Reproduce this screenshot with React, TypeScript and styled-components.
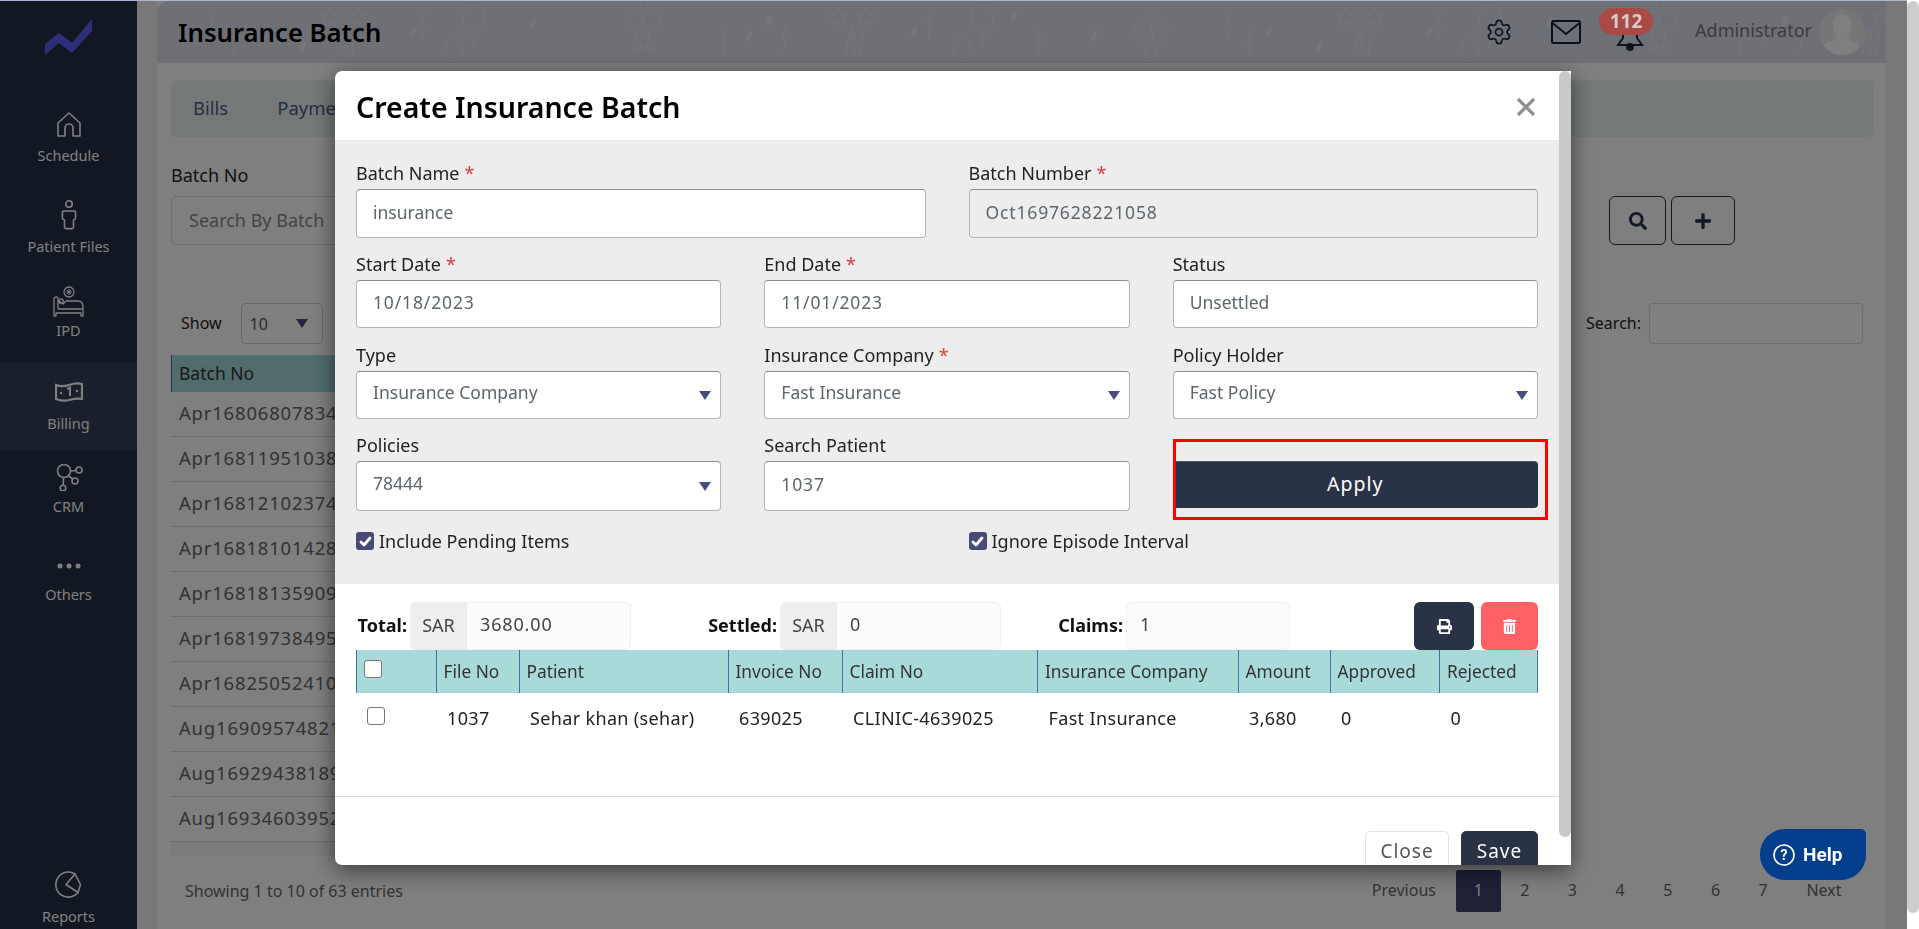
import React from "react";
import styled, { createGlobalStyle } from "styled-components";
import { FaSearch, FaPlus, FaPrint, FaTrashAlt } from "react-icons/fa";
import { Settings } from "lucide-react";

const FONT = `"Noto Sans", "Open Sans", "Lato", sans-serif`;

const Global = createGlobalStyle`
  html, body { height: 929px; overflow: hidden; background: #fff; }
  body { margin: 0; font-family: ${FONT}; font-size: 18px; color: #222; }
  * { box-sizing: border-box; }
`;

const Shell = styled.div`
  display: grid;
  grid-template-columns: 137px 1fr;
  width: 1907px;
  height: 929px;
  overflow: hidden;
  background: #eef0ee;
`;

const PageBar = styled.div`
  position: fixed;
  right: 0;
  top: 0;
  width: 12px;
  height: 929px;
  background: #fff;
`;

const BarThumb = styled.div<{ $h: number }>`
  width: 12px;
  height: ${(p) => p.$h}px;
  margin-top: 1px;
  border-radius: 6px;
  background: #cdcdcd;
`;

const Sidebar = styled.aside`
  height: 929px;
  background: #243042;
  display: flex;
  flex-direction: column;
  color: #fff;
`;

const LogoBox = styled.div`
  height: 100px;
  display: flex;
  justify-content: center;
  padding-top: 19px;
`;

const NavItem = styled.div<{ $h: number; $pad: number; $gap: number; $active?: boolean; $bottom?: boolean }>`
  height: ${(p) => p.$h}px;
  padding-top: ${(p) => p.$pad}px;
  background: ${(p) => (p.$active ? "#344056" : "transparent")};
  margin-top: ${(p) => (p.$bottom ? "auto" : "0")};
  display: flex;
  flex-direction: column;
  align-items: center;
  gap: ${(p) => p.$gap}px;
`;

const NavIcon = styled.div`
  height: 32px;
  display: flex;
  align-items: center;
  justify-content: center;
`;

const NavLabel = styled.div`
  font-size: 14.5px;
  line-height: 20px;
  white-space: nowrap;
`;

const Main = styled.main`
  padding: 1px 21px 0 20px;
  min-width: 0;
`;

const Card = styled.div`
  background: #fff;
  height: 928px;
  display: flex;
  flex-direction: column;
`;

const Header = styled.header`
  position: relative;
  height: 62px;
  background: #dde0ea;
  border-top-left-radius: 12px;
  display: flex;
  align-items: center;
  padding: 0 0 0 21px;
`;

const Confetti = styled.svg`
  position: absolute;
  left: 0;
  top: 0;
  width: 100%;
  height: 100%;
`;

const PageTitle = styled.h1`
  position: relative;
  margin: 0;
  font-size: 25.7px;
  font-weight: 600;
  color: #000;
  flex: 1;
`;

const HeadIcons = styled.div`
  position: relative;
  display: flex;
  align-items: center;
  height: 100%;
`;

const IconSlot = styled.div<{ $w: number; $drop?: number }>`
  width: ${(p) => p.$w}px;
  padding-top: ${(p) => p.$drop || 0}px;
  display: flex;
  justify-content: center;
  align-items: center;
  color: #1f2a3f;
`;

const Badge = styled.span`
  position: absolute;
  z-index: 11;
  left: 1599px;
  top: 8px;
  width: 54px;
  height: 27px;
  border-radius: 14px;
  background: #a84a46;
  color: #ddc8c4;
  font-size: 19px;
  font-weight: 700;
  line-height: 27px;
  text-align: center;
`;

const AdminName = styled.span`
  font-size: 18px;
  color: #777;
  margin-left: 36px;
  margin-right: 7px;
  padding-bottom: 4px;
`;

const Avatar = styled.div`
  width: 46px;
  height: 46px;
  border-radius: 50%;
  background: #ececec;
  overflow: hidden;
  margin-right: 21px;
`;

const Body = styled.div`
  padding: 17px 13px 0 14px;
  display: flex;
  flex-direction: column;
`;

const Tabs = styled.nav`
  height: 57px;
  background: #e9f3ef;
  border-radius: 5px;
  padding: 0 22px 2px;
  display: flex;
  align-items: center;
  gap: 49px;
  color: #4f5a84;
  font-size: 18.5px;
`;

const SearchRow = styled.div`
  display: flex;
  align-items: flex-end;
  margin-top: 26px;
  height: 82px;
`;

const LabelCol = styled.div`
  width: 700px;
  display: flex;
  flex-direction: column;
  gap: 9px;
  font-size: 18px;
  color: #222;
`;

const BgInput = styled.div`
  height: 49px;
  border: 1px solid #dcdcdc;
  border-radius: 5px;
  padding: 0 17px 2px;
  display: flex;
  align-items: center;
  color: #888;
  font-size: 18px;
`;

const OutlineBtn = styled.div<{ $w: number }>`
  width: ${(p) => p.$w}px;
  height: 49px;
  border: 1px solid #26304a;
  border-radius: 6px;
  color: #26304a;
  display: flex;
  align-items: center;
  justify-content: center;
  font-size: 18px;
`;

const BtnGroup = styled.div`
  margin-left: auto;
  margin-right: 138px;
  display: flex;
  gap: 5px;
`;

const ShowRow = styled.div`
  display: flex;
  align-items: center;
  height: 41px;
  margin-top: 58px;
  padding: 0 10px;
  font-size: 16px;
  color: #222;
`;

const ShowText = styled.span`
  padding-bottom: 2px;
`;

const ShowSelect = styled.div`
  width: 82px;
  height: 41px;
  border: 1px solid #ccc;
  border-radius: 5px;
  margin-left: 19px;
  padding: 0 14px 0 8px;
  display: flex;
  align-items: center;
  justify-content: space-between;
  color: #555;
`;

const Triangle = styled.span<{ $drop?: number }>`
  width: 0;
  height: 0;
  margin-top: ${(p) => p.$drop || 0}px;
  border-left: 6px solid transparent;
  border-right: 6px solid transparent;
  border-top: 9px solid #494d7c;
`;

const SearchLabel = styled.span`
  margin-left: auto;
  margin-right: 8px;
  padding-bottom: 2px;
`;

const SearchBox = styled.div`
  width: 214px;
  height: 41px;
  border: 1px solid #ddd;
  border-radius: 3px;
`;

const BgTable = styled.div`
  margin-top: 11px;
  width: 1300px;
  border-bottom: 14px solid #f6f6f6;
`;

const BgHead = styled.div`
  height: 37px;
  background: #a5d7d7;
  border-left: 1px solid #3b6e9e;
  padding: 0 7px 1px;
  display: flex;
  align-items: center;
  font-size: 17.5px;
  color: #333;
`;

const BgRow = styled.div`
  height: 45px;
  border-bottom: 1px solid #ddd;
  padding: 0 8px 3px;
  display: flex;
  align-items: center;
  font-size: 18.5px;
  letter-spacing: 0.8px;
  color: #666;
`;

const BgFooter = styled.div`
  display: flex;
  align-items: center;
  margin-top: 14px;
  height: 42px;
  padding-left: 14px;
  font-size: 16px;
  color: #666;
`;

const Pager = styled.div`
  margin-left: auto;
  margin-right: 12px;
  display: flex;
  align-items: center;
  color: #666;
`;

const PageBtn = styled.span<{ $active?: boolean; $wide?: number }>`
  width: ${(p) => p.$wide || 47.7}px;
  height: 42px;
  border-radius: 2px;
  padding-bottom: 3px;
  display: flex;
  align-items: center;
  justify-content: center;
  background: ${(p) => (p.$active ? "#404072" : "transparent")};
  color: ${(p) => (p.$active ? "#fff" : "#666")};
`;

const Overlay = styled.div`
  position: fixed;
  left: 0;
  top: 0;
  width: 1907px;
  height: 929px;
  z-index: 10;
  background: rgba(0, 0, 0, 0.5);
  border-top: 1px solid #aab6d4;
`;

const Modal = styled.div`
  position: fixed;
  z-index: 20;
  left: 335px;
  top: 71px;
  width: 1236px;
  height: 794px;
  padding-right: 12px;
  background: #fff;
  border-radius: 7px 0 0 7px;
  box-shadow: 0 5px 22px rgba(0, 0, 0, 0.55);
  overflow: hidden;
`;

const ModalThumb = styled.div`
  position: absolute;
  right: 0;
  top: 0;
  width: 12px;
  height: 766px;
  border-radius: 6px;
  background: #c9c9c9;
`;

const ModalHead = styled.div`
  height: 69px;
  padding: 2px 21px 0;
  display: flex;
  align-items: center;
  justify-content: space-between;
`;

const ModalTitle = styled.h2`
  margin: 0;
  font-size: 28.5px;
  font-weight: 600;
  color: #000;
`;

const CloseX = styled.svg`
  width: 20px;
  height: 20px;
  margin-right: 2px;
`;

const FormArea = styled.div`
  background: #ededed;
  height: 444px;
  padding: 22px 21px 0;
  display: flex;
  flex-direction: column;
`;

const Row = styled.div<{ $cols: number; $top: number }>`
  display: grid;
  grid-template-columns: repeat(${(p) => p.$cols}, 1fr);
  column-gap: 43px;
  margin-top: ${(p) => p.$top}px;
`;

const Field = styled.div`
  display: flex;
  flex-direction: column;
`;

const Label = styled.label`
  height: 27px;
  line-height: 23px;
  font-size: 18px;
  color: #222;
  white-space: nowrap;
`;

const Req = styled.span`
  color: #e0393e;
  margin-left: 5px;
`;

const TextInput = styled.input<{ $h?: number; $num?: boolean }>`
  width: 100%;
  height: ${(p) => p.$h || 48}px;
  border: 1px solid #b4b4b4;
  border-top-color: #8e8e8e;
  border-radius: 4px;
  background: ${(p) => (p.readOnly ? "#ededed" : "#fff")};
  padding: 0 16px 4px;
  font: 17.5px ${FONT};
  letter-spacing: ${(p) => (p.$num ? "0.85px" : "0")};
  color: #5d666c;
  outline: none;
`;

const SelectBox = styled.div<{ $h?: number }>`
  height: ${(p) => p.$h || 48}px;
  border: 1px solid #b4b4b4;
  border-top-color: #8e8e8e;
  border-radius: 4px;
  background: #fff;
  padding: 0 9px 6px 16px;
  display: flex;
  align-items: center;
  justify-content: space-between;
  font-size: 17.5px;
  color: #5d666c;
`;

const ApplyCell = styled.div`
  position: relative;
  padding-top: 27px;
`;

const ApplyBtn = styled.button`
  width: 100%;
  height: 47px;
  border: none;
  border-top: 1px solid #4b5468;
  border-radius: 4px;
  padding-bottom: 4px;
  background: #2a3246;
  color: #fff;
  font: 19.5px ${FONT};
  letter-spacing: 1px;
`;

const RedMark = styled.div`
  position: absolute;
  left: 0;
  top: 5px;
  width: 375px;
  height: 81px;
  border: 3px solid #f00;
`;

const CheckRow = styled.div`
  display: grid;
  grid-template-columns: 1fr 1fr;
  column-gap: 43px;
  margin-top: 19px;
`;

const CheckLabel = styled.label`
  display: flex;
  align-items: center;
  gap: 5px;
  height: 22px;
  font-size: 18px;
  color: #222;
`;

const Check = styled.span<{ $on?: boolean }>`
  width: 18px;
  height: 18px;
  border-radius: 3px;
  flex: none;
  display: inline-flex;
  align-items: center;
  justify-content: center;
  background: ${(p) => (p.$on ? "#484a78" : "#fff")};
  border: ${(p) => (p.$on ? "none" : "1px solid #767676")};
`;

const Summary = styled.div`
  display: flex;
  align-items: stretch;
  height: 48px;
  margin: 18px 21px 0;
  font-size: 18px;
`;

const SumLabel = styled.b<{ $w: number }>`
  width: ${(p) => p.$w}px;
  flex: none;
  display: flex;
  align-items: center;
  justify-content: flex-end;
  padding: 0 3px 2px 0;
  font-weight: 700;
  color: #111;
`;

const Addon = styled.span`
  width: 57px;
  flex: none;
  background: #eeeeee;
  border: 1px solid #ececec;
  border-radius: 6px 0 0 6px;
  padding-bottom: 2px;
  display: flex;
  align-items: center;
  justify-content: center;
  color: #444;
`;

const SumValue = styled.span<{ $w: number; $solo?: boolean }>`
  width: ${(p) => p.$w}px;
  flex: none;
  background: #fcfcfc;
  border: 1px solid #f0f0f0;
  border-left: none;
  border-radius: 0 6px 6px 0;
  padding: 0 0 5px 13px;
  display: flex;
  align-items: center;
  letter-spacing: 0.85px;
  color: #444;
  ${(p) => p.$solo && "border-left: 1px solid #f0f0f0; border-radius: 6px;"}
`;

const SumBtn = styled.button<{ $bg: string; $w: number; $left: number }>`
  flex: none;
  width: ${(p) => p.$w}px;
  margin-left: ${(p) => p.$left}px;
  height: 48px;
  border: none;
  border-radius: 6px;
  background: ${(p) => p.$bg};
  color: #fff;
  font-size: 15px;
  display: flex;
  align-items: center;
  justify-content: center;
`;

const TableWrap = styled.div`
  margin: 0 21px;
  height: 146px;
`;

const Table = styled.table`
  width: 1182px;
  table-layout: fixed;
  border-collapse: collapse;
`;

const Col = styled.col<{ $w: number }>`
  width: ${(p) => p.$w}px;
`;

const Th = styled.th`
  height: 43px;
  background: #a9dada;
  border-left: 1px solid #3f74a3;
  font-weight: 400;
  font-size: 17.3px;
  text-align: left;
  padding: 0 6px 0 7px;
  color: #333;
  white-space: nowrap;
  &:first-child { border-left: none; box-shadow: inset 1px 0 #3f74a3; padding-left: 8px; }
  &:last-child { box-shadow: inset -1px 0 #3f74a3; }
`;

const Td = styled.td`
  height: 52px;
  padding: 0 6px 2px 11px;
  font-size: 18px;
  letter-spacing: 0.35px;
  color: #222;
  white-space: nowrap;
  &:first-child { padding-left: 11px; }
`;

const Divider = styled.div`
  border-top: 1px solid #dfdfdf;
`;

const ModalFoot = styled.div`
  display: flex;
  justify-content: flex-end;
  gap: 12px;
  padding: 34px 21px 15px;
`;

const FootBtn = styled.button<{ $w: number; $primary?: boolean }>`
  width: ${(p) => p.$w}px;
  height: 48px;
  border-radius: 5px;
  padding-bottom: 9px;
  border: 1px solid ${(p) => (p.$primary ? "#2a3246" : "#e2e2e2")};
  background: ${(p) => (p.$primary ? "#2a3246" : "#fff")};
  color: ${(p) => (p.$primary ? "#fff" : "#555")};
  font: 19px ${FONT};
  letter-spacing: 1px;
`;

const Help = styled.button`
  position: fixed;
  z-index: 30;
  left: 1760px;
  top: 829px;
  width: 106px;
  height: 51px;
  border: none;
  border-radius: 25px 5px 25px 25px;
  background: #033e8c;
  color: #fff;
  font: 700 19px Roboto, sans-serif;
  display: flex;
  align-items: center;
  gap: 8px;
  padding: 0 0 0 13px;
`;

const stroke = { fill: "none", stroke: "currentColor", strokeWidth: 1.6, strokeLinecap: "round", strokeLinejoin: "round" } as const;

const HomeIcon = () => (
  <svg width="26" height="28" viewBox="0 0 26 28" {...stroke}>
    <path d="M2 25V12L13 2l11 10v13h-7v-8a4 4 0 0 0-8 0v8H2z" />
  </svg>
);
const PersonIcon = () => (
  <svg width="16" height="30" viewBox="0 0 16 30" {...stroke}>
    <circle cx="8" cy="4" r="3.2" />
    <path d="M3 11h10c1 0 1.600.6 1.600 1.600V18c0 1-.6 1.600-2.100 2v7c0 1-.8 1.600-1.500 1.600H5c-.8 0-1.500-.6-1.500-1.600v-7C2 19.600 1.400 19 1.400 18v-5.400C1.400 11.600 2 11 3 11z" />
  </svg>
);
const BedIcon = () => (
  <svg width="32" height="32" viewBox="0 0 32 32" fill="none" stroke="currentColor" strokeWidth="1.3" strokeLinejoin="round">
    <circle cx="16" cy="6" r="5" />
    <path d="M16 3v6M13 6h6M14 4l4 4M18 4l-4 4" strokeWidth="1" />
    <path d="M1 13v17h2v-3h25v3h2V21c0-4-2-6-5-6H13l-3 3-5-4v-1a2 2 0 0 0-4 0z" />
    <path d="M5 23V14M5 23h25" />
    <circle cx="8" cy="15" r="2.200" />
  </svg>
);
const MoneyIcon = () => (
  <svg width="28" height="20" viewBox="0 0 28 20" fill="none" stroke="currentColor" strokeWidth="2.200">
    <path d="M1 3c5 2 10 1 13 0s9-2 13-1v15c-5-1-9 0-13 1s-8 1-13-1z" />
    <path d="M12 7l3-1.500V14" strokeWidth="2" />
    <circle cx="6" cy="11" r="1.200" fill="currentColor" stroke="none" />
    <circle cx="22" cy="9" r="1.200" fill="currentColor" stroke="none" />
  </svg>
);
const CrmIcon = () => (
  <svg width="28" height="28" viewBox="0 0 28 28" {...stroke}>
    <circle cx="9" cy="8" r="6.500" />
    <circle cx="24" cy="7" r="3" />
    <circle cx="20" cy="18" r="3" />
    <circle cx="8" cy="25" r="2.800" />
    <path d="M15.500 8l5.500-.5M13.500 13l4.500 3M8.500 14.500l-.3 7.800" />
  </svg>
);
const DotsIcon = () => (
  <svg width="24" height="6" viewBox="0 0 24 6" fill="currentColor">
    <circle cx="3" cy="3" r="2.500" />
    <circle cx="12" cy="3" r="2.500" />
    <circle cx="21" cy="3" r="2.500" />
  </svg>
);
const ReportIcon = () => (
  <svg width="27" height="27" viewBox="0 0 27 27" {...stroke}>
    <path d="M20 3A12.500 12.500 0 1 0 23 21.500" />
    <path d="M20 3l5.500 10.500L23 21.500" />
    <path d="M20 3L11 13.500 23 21.500" />
  </svg>
);
const Logo = () => (
  <svg width="48" height="37" viewBox="0 0 48 37">
    <path d="M0 25L14 14l13 10L47 0v12L27 34 14 24 0 36z" fill="#5b60f0" />
  </svg>
);
const Mail = () => (
  <svg width="30" height="24" viewBox="0 0 30 24" fill="none" stroke="#14203a" strokeWidth="2">
    <rect x="1" y="1" width="28" height="22" rx="1.500" />
    <path d="M1.500 3L15 14 28.500 3" />
  </svg>
);
const Bell = () => (
  <svg width="28" height="32" viewBox="0 0 28 32" fill="none" stroke="#1f2a3f" strokeWidth="2">
    <path d="M14 2c-4 0-7 3-7 8v9l-5 7h24l-5-7v-9c0-5-3-8-7-8z" />
    <circle cx="14" cy="28" r="3" fill="#1f2a3f" />
  </svg>
);
const Silhouette = () => (
  <svg width="46" height="46" viewBox="0 0 46 46">
    <path d="M23 5c6 0 9 5 9 11 0 5-2 9-4 12 1 3 7 4 11 6 2 1 3 4 3 12H4c0-8 1-11 3-12 4-2 10-3 11-6-2-3-4-7-4-12 0-6 3-11 9-11z" fill="#fff" />
  </svg>
);

const glasses = (x: number, y: number) => (
  <g transform={`translate(${x} ${y})`}>
    <path d="M-24 6l15-6 5 14c1 6-5 8-8 7-3 0-6-2-7-5zM-13 22l2 15M-17 39l11-3" />
    <path d="M-3 0l15 6-5 10c-1 3-4 5-7 5-3 1-9-1-8-7zM0 22l-2 15M-7 36l11 3" />
    <path d="M-8 -3l-2-6M-3 -3l2-6" />
  </g>
);
const stars = (x: number, y: number) => (
  <g transform={`translate(${x} ${y})`}>
    <path d="M0 20l-4 10 4-3 4 3-4-10zM-14 0l3 6 6 0-4 4 1 6-6-3-6 3 1-6-4-4 6 0zM14 0l3 6 6 0-4 4 1 6-6-3-6 3 1-6-4-4 6 0z" />
    <path d="M-6 50c0-10 1-18 4-24M2 50c0-10 0-18 0-24M8 50c0-10 2-18 4-30" />
  </g>
);
const balloon = (x: number, y: number) => (
  <g transform={`translate(${x} ${y})`}>
    <ellipse cx="0" cy="12" rx="11" ry="15" />
    <path d="M0 27c3 6-2 9 0 15" />
    <ellipse cx="-20" cy="42" rx="9" ry="12" />
  </g>
);
const squiggle = (x: number, y: number) => <path d={`M${x} ${y}c4 5-4 9 0 14s-3 9 0 14`} />;
const leaf = (x: number, y: number) => (
  <ellipse cx={x} cy={y} rx="2" ry="6" transform={`rotate(25 ${x} ${y})`} fill="#fff" stroke="none" />
);

const Decoration = () => (
  <Confetti aria-hidden="true">
    <defs>
      <pattern id="party" x="432" y="0" width="1016" height="62" patternUnits="userSpaceOnUse">
        <g fill="none" stroke="#fff" strokeWidth="1" opacity="0.42">
          {glasses(60, 10)}
          {stars(263, 8)}
          {balloon(393, 6)}
          {glasses(568, 20)}
          {stars(771, 8)}
          {balloon(901, 6)}
          {squiggle(135, 25)}
          {squiggle(195, 25)}
          {squiggle(340, 10)}
          {squiggle(450, 30)}
          {squiggle(640, 10)}
          {squiggle(660, 30)}
          {squiggle(850, 10)}
          {leaf(160, 35)}
          {leaf(180, 20)}
          {leaf(325, 30)}
          {leaf(425, 15)}
          {leaf(505, 35)}
          {leaf(680, 30)}
          {leaf(730, 45)}
          {leaf(840, 32)}
          {leaf(960, 22)}
        </g>
      </pattern>
    </defs>
    <rect width="100%" height="100%" fill="url(#party)" />
  </Confetti>
);

const navs = [
  { label: "Schedule", icon: <HomeIcon />, h: 90, pad: 9, gap: 4 },
  { label: "Patient Files", icon: <PersonIcon />, h: 84, pad: 9, gap: 5 },
  { label: "IPD", icon: <BedIcon />, h: 88, pad: 12, gap: 2 },
  { label: "Billing", icon: <MoneyIcon />, h: 88, pad: 14, gap: 5, active: true },
  { label: "CRM", icon: <CrmIcon />, h: 82, pad: 11, gap: 3 },
  { label: "Others", icon: <DotsIcon />, h: 82, pad: 18, gap: 2 },
];

const batches = [
  "Apr16806807834",
  "Apr16811951038",
  "Apr16812102374",
  "Apr16818101428",
  "Apr16818135909",
  "Apr16819738495",
  "Apr16825052410",
  "Aug16909574821",
  "Aug16929438189",
  "Aug16934603952",
];

const colWidths = [80, 83, 209, 114, 195.5, 200.5, 92, 109.6, 98.4];
const heads = ["File No", "Patient", "Invoice No", "Claim No", "Insurance Company", "Amount", "Approved", "Rejected"];
const cells = ["1037", "Sehar khan (sehar)", "639025", "CLINIC-4639025", "Fast Insurance", "3,680", "0", "0"];

const CheckMark = () => (
  <svg width="13" height="11" viewBox="0 0 13 11" fill="none" stroke="#fff" strokeWidth="2.800" strokeLinecap="round" strokeLinejoin="round">
    <path d="M2 6l3 3 6-7" />
  </svg>
);

export default function App() {
  return (
    <>
      <Global />
      <Shell>
        <Sidebar>
          <LogoBox>
            <Logo />
          </LogoBox>
          {navs.map((n) => (
            <NavItem key={n.label} $h={n.h} $pad={n.pad} $gap={n.gap} $active={n.active}>
              <NavIcon>{n.icon}</NavIcon>
              <NavLabel>{n.label}</NavLabel>
            </NavItem>
          ))}
          <NavItem $h={85} $pad={24} $gap={6} $bottom>
            <NavIcon>
              <ReportIcon />
            </NavIcon>
            <NavLabel>Reports</NavLabel>
          </NavItem>
        </Sidebar>
        <Main>
          <Card>
            <Header>
              <Decoration />
              <PageTitle>Insurance Batch</PageTitle>
              <HeadIcons>
                <IconSlot $w={64}>
                  <Settings size={28} strokeWidth={1.5} />
                </IconSlot>
                <IconSlot $w={70}>
                  <Mail />
                </IconSlot>
                <IconSlot $w={58} $drop={5}>
                  <Bell />
                </IconSlot>
                <AdminName>Administrator</AdminName>
                <Avatar>
                  <Silhouette />
                </Avatar>
              </HeadIcons>
            </Header>
            <Body>
              <Tabs>
                <span>Bills</span>
                <span>Payments</span>
              </Tabs>
              <SearchRow>
                <LabelCol>
                  <span>Batch No</span>
                  <BgInput>Search By Batch</BgInput>
                </LabelCol>
                <BtnGroup>
                  <OutlineBtn $w={57}>
                    <FaSearch />
                  </OutlineBtn>
                  <OutlineBtn $w={64}>
                    <FaPlus />
                  </OutlineBtn>
                </BtnGroup>
              </SearchRow>
              <ShowRow>
                <ShowText>Show</ShowText>
                <ShowSelect>
                  10 <Triangle />
                </ShowSelect>
                <SearchLabel>Search:</SearchLabel>
                <SearchBox />
              </ShowRow>
              <BgTable>
                <BgHead>Batch No</BgHead>
                {batches.map((b) => (
                  <BgRow key={b}>{b}</BgRow>
                ))}
              </BgTable>
              <BgFooter>
                <span>Showing 1 to 10 of 63 entries</span>
                <Pager>
                  <PageBtn $wide={104}>Previous</PageBtn>
                  <PageBtn $active $wide={45}>
                    1
                  </PageBtn>
                  {[2, 3, 4, 5, 6, 7].map((n) => (
                    <PageBtn key={n}>{n}</PageBtn>
                  ))}
                  <PageBtn $wide={74}>Next</PageBtn>
                </Pager>
              </BgFooter>
            </Body>
          </Card>
        </Main>
      </Shell>
      <PageBar>
        <BarThumb $h={912} />
      </PageBar>
      <Badge>112</Badge>
      <Overlay />
      <Modal>
        <ModalHead>
          <ModalTitle>Create Insurance Batch</ModalTitle>
          <CloseX viewBox="0 0 20 20" fill="none" stroke="#8f8f8f" strokeWidth="3.200">
            <path d="M2 2l16 16M18 2L2 18" />
          </CloseX>
        </ModalHead>
        <FormArea>
          <Row $cols={2} $top={0}>
            <Field>
              <Label>
                Batch Name<Req>*</Req>
              </Label>
              <TextInput defaultValue="insurance" $h={49} />
            </Field>
            <Field>
              <Label>
                Batch Number<Req>*</Req>
              </Label>
              <TextInput defaultValue="Oct1697628221058" readOnly $h={49} $num />
            </Field>
          </Row>
          <Row $cols={3} $top={15}>
            <Field>
              <Label>
                Start Date<Req>*</Req>
              </Label>
              <TextInput defaultValue="10/18/2023" $num />
            </Field>
            <Field>
              <Label>
                End Date<Req>*</Req>
              </Label>
              <TextInput defaultValue="11/01/2023" $num />
            </Field>
            <Field>
              <Label>Status</Label>
              <TextInput defaultValue="Unsettled" />
            </Field>
          </Row>
          <Row $cols={3} $top={16}>
            <Field>
              <Label>Type</Label>
              <SelectBox>
                Insurance Company <Triangle $drop={6} />
              </SelectBox>
            </Field>
            <Field>
              <Label>
                Insurance Company<Req>*</Req>
              </Label>
              <SelectBox>
                Fast Insurance <Triangle $drop={6} />
              </SelectBox>
            </Field>
            <Field>
              <Label>Policy Holder</Label>
              <SelectBox>
                Fast Policy <Triangle $drop={6} />
              </SelectBox>
            </Field>
          </Row>
          <Row $cols={3} $top={15}>
            <Field>
              <Label>Policies</Label>
              <SelectBox $h={50}>
                78444 <Triangle $drop={6} />
              </SelectBox>
            </Field>
            <Field>
              <Label>Search Patient</Label>
              <TextInput defaultValue="1037" $h={50} $num />
            </Field>
            <ApplyCell>
              <ApplyBtn>Apply</ApplyBtn>
              <RedMark />
            </ApplyCell>
          </Row>
          <CheckRow>
            <CheckLabel>
              <Check $on>
                <CheckMark />
              </Check>
              Include Pending Items
            </CheckLabel>
            <CheckLabel>
              <Check $on>
                <CheckMark />
              </Check>
              Ignore Episode Interval
            </CheckLabel>
          </CheckRow>
        </FormArea>
        <Summary>
          <SumLabel $w={54}>Total:</SumLabel>
          <Addon>SAR</Addon>
          <SumValue $w={164}>3680.00</SumValue>
          <SumLabel $w={149}>Settled:</SumLabel>
          <Addon>SAR</Addon>
          <SumValue $w={164}>0</SumValue>
          <SumLabel $w={125}>Claims:</SumLabel>
          <SumValue $w={164} $solo>
            1
          </SumValue>
          <SumBtn $bg="#2a3246" $w={60} $left={124}>
            <FaPrint />
          </SumBtn>
          <SumBtn $bg="#ff6166" $w={57} $left={7}>
            <FaTrashAlt />
          </SumBtn>
        </Summary>
        <TableWrap>
          <Table>
            <colgroup>
              {colWidths.map((w, i) => (
                <Col key={i} $w={w} />
              ))}
            </colgroup>
            <thead>
              <tr>
                <Th>
                  <Check />
                </Th>
                {heads.map((h) => (
                  <Th key={h}>{h}</Th>
                ))}
              </tr>
            </thead>
            <tbody>
              <tr>
                <Td>
                  <Check />
                </Td>
                {cells.map((c, i) => (
                  <Td key={i}>{c}</Td>
                ))}
              </tr>
            </tbody>
          </Table>
        </TableWrap>
        <Divider />
        <ModalFoot>
          <FootBtn $w={84}>Close</FootBtn>
          <FootBtn $w={77} $primary>
            Save
          </FootBtn>
        </ModalFoot>
        <ModalThumb />
      </Modal>
      <Help>
        <svg width="22" height="22" viewBox="0 0 22 22" fill="none" stroke="#fff" strokeWidth="1.600">
          <circle cx="11" cy="11" r="10" />
          <text x="11" y="16" textAnchor="middle" fontSize="14" fontWeight="700" fill="#fff" stroke="none" fontFamily="Roboto">?</text>
        </svg>
        Help
      </Help>
    </>
  );
}
